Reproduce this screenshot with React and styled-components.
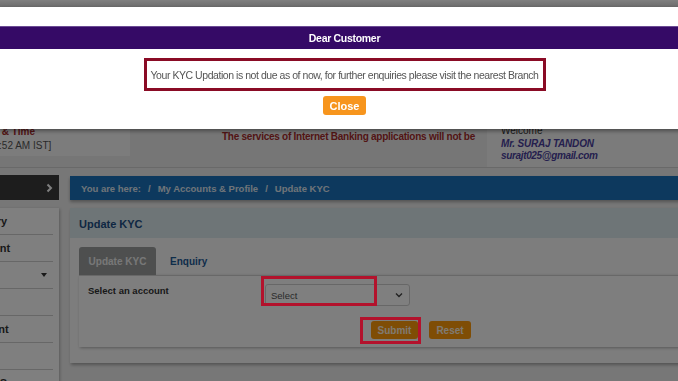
import React from "react";
import styled, { createGlobalStyle } from "styled-components";

const GlobalStyle = createGlobalStyle`
  html, body {
    margin: 0;
    padding: 0;
    overflow: hidden;
    background: #efefef;
    font-family: "Liberation Sans", Arial, sans-serif;
  }
`;

const Viewport = styled.div`
  width: 678px;
  height: 381px;
  overflow: hidden;
`;

const Page = styled.div`
  margin-left: -110px;
  width: 820px;
`;

const TopNav = styled.div`
  height: 7px;
  background: linear-gradient(#ffffff, #d8d8d8);
  border-bottom: 1px solid #9a9a9a;
`;

const Header = styled.div`
  height: 159px;
  display: flex;
  align-items: flex-end;
  background: #ececec;
  border-bottom: 1px solid #d2d2d2;
`;

const LoginBox = styled.div`
  width: 240px;
  height: 40px;
  margin-bottom: 11px;
  box-sizing: border-box;
  padding: 9px 0 0 ${({ pad }) => pad}px;
  background: #f9f9f9;
  font-size: 10px;
  line-height: 14px;
  color: #555;
`;

const LoginTitle = styled.div`
  font-weight: bold;
  color: #a52a2a;
`;

const Notice = styled.div`
  margin: 0 0 25px 92px;
  font-size: 10px;
  letter-spacing: -0.25px;
  font-weight: bold;
  color: #a52a2a;
  white-space: nowrap;
`;

const WelcomeBox = styled.div`
  margin-left: auto;
  width: 223px;
  height: 56px;
  box-sizing: border-box;
  padding: 14px 0 0 14px;
  background: #f6f6f6;
  font-size: 10px;
  line-height: 12.5px;
  color: #333;
`;

const UserLine = styled.div`
  font-weight: bold;
  font-style: italic;
  font-size: ${({ size }) => size}px;
  letter-spacing: ${({ spacing }) => spacing}px;
  color: #4a3f9c;
`;

const Body = styled.div`
  display: flex;
  gap: 11px;
  padding-top: 7px;
`;

const Sidebar = styled.div`
  width: 169px;
  flex-shrink: 0;
`;

const SideHead = styled.div`
  height: 25px;
  background: #3b3b3b;
  color: #fff;
  display: flex;
  align-items: center;
  justify-content: flex-end;
  padding-right: 6px;
`;

const SideMenu = styled.div`
  margin-top: 8px;
  background: #fff;
  box-shadow: 1px 1px 3px rgba(0, 0, 0, 0.25);
  padding-right: 6px;
`;

const SideItem = styled.div`
  height: 26px;
  display: flex;
  align-items: center;
  justify-content: space-between;
  padding: 0 6px 0 20px;
  border-bottom: 1px solid #cfcfcf;
  font-size: 11px;
  font-weight: bold;
  color: #333;
  white-space: nowrap;
`;

const Caret = styled.span`
  width: 0;
  height: 0;
  border-left: 3.5px solid transparent;
  border-right: 3.5px solid transparent;
  border-top: 4px solid #333;
`;

const Main = styled.div`
  flex: 1;
`;

const Breadcrumb = styled.div`
  height: 24px;
  margin-top: 1px;
  background: #1b73bd;
  box-shadow: 0 2px 3px rgba(0, 0, 0, 0.3);
  display: flex;
  align-items: center;
  gap: 7px;
  padding-left: 11px;
  font-size: 9.5px;
  font-weight: bold;
  color: #dfe8f2;
`;

const Card = styled.div`
  margin-top: 8px;
  background: #fbfbfb;
  box-shadow: 1px 2px 3px rgba(0, 0, 0, 0.3);
  padding-bottom: 16px;
`;

const CardHead = styled.div`
  height: 30px;
  background: #dcebee;
  display: flex;
  align-items: center;
  padding: 1px 0 0 9px;
  box-sizing: border-box;
  font-size: 11px;
  font-weight: bold;
  color: #1d4f86;
`;

const CardBody = styled.div`
  padding: 9px 0 0 9px;
`;

const Tabs = styled.div`
  display: flex;
  height: 28px;
`;

const Tab = styled.div`
  width: ${({ active }) => (active ? "77px" : "auto")};
  padding: ${({ active }) => (active ? "0" : "0 14px")};
  display: flex;
  align-items: center;
  justify-content: center;
  border-radius: 3px 3px 0 0;
  background: ${({ active }) => (active ? "#9c9f9f" : "transparent")};
  color: ${({ active }) => (active ? "#f0f0f0" : "#1d5a96")};
  font-size: 10px;
  font-weight: bold;
`;

const TabPanel = styled.div`
  height: 72px;
  background: #fdfdfd;
  border-top: 1px solid #d0d0d0;
  box-shadow: 1px 1px 3px rgba(0, 0, 0, 0.3);
  box-sizing: border-box;
  padding: 7px 0 0 9px;
`;

const FieldRow = styled.div`
  display: flex;
  align-items: flex-start;
`;

const Label = styled.div`
  width: 177px;
  flex-shrink: 0;
  font-size: 9.5px;
  font-weight: bold;
  color: #333;
  padding-top: 2px;
`;

const SelectWrap = styled.div`
  position: relative;
  margin-top: 1px;
`;

const Select = styled.div`
  width: 145px;
  height: 22px;
  box-sizing: border-box;
  border: 1px solid #cfcfcf;
  border-radius: 3px;
  background: #fff;
  display: flex;
  align-items: center;
  justify-content: space-between;
  padding: 0 6px 0 5px;
  font-size: 9.5px;
  color: #555;
`;

const ButtonRow = styled.div`
  display: flex;
  gap: 11px;
  margin-top: 15px;
  padding-left: 283px;
`;

const ActionButton = styled.div`
  position: relative;
  width: ${({ w }) => w}px;
  height: 18px;
  display: flex;
  align-items: center;
  justify-content: center;
  border-radius: 3px;
  background: #ff9a0a;
  color: #fff4e2;
  font-size: 10px;
  font-weight: bold;
`;

const Mark = styled.div`
  position: absolute;
  z-index: 30;
  border: 3px solid #b3122c;
  box-sizing: border-box;
`;

const Overlay = styled.div`
  position: fixed;
  inset: 0;
  z-index: 10;
  background: rgba(0, 0, 0, 0.5);
`;

const Modal = styled.div`
  position: fixed;
  top: 7px;
  left: 0;
  right: -11px;
  height: 122px;
  z-index: 20;
  background: #fff;
  box-shadow: 0 2px 4px rgba(0, 0, 0, 0.4);
  padding-top: 19px;
  box-sizing: border-box;
  display: flex;
  flex-direction: column;
  align-items: center;
`;

const ModalHead = styled.div`
  align-self: stretch;
  height: 23px;
  background: #350a66;
  border-top: 1px solid #6b4c94;
  box-sizing: border-box;
  display: flex;
  align-items: center;
  justify-content: center;
  color: #fff;
  font-size: 10.5px;
  letter-spacing: -0.3px;
  font-weight: bold;
`;

const Message = styled.div`
  margin-top: 9px;
  width: 402px;
  height: 33px;
  box-sizing: border-box;
  border: 3px solid #8a0b25;
  display: flex;
  align-items: center;
  justify-content: center;
  font-size: 10.5px;
  letter-spacing: -0.45px;
  color: #555;
  white-space: nowrap;
`;

const CloseButton = styled.div`
  margin-top: 5px;
  width: 43px;
  height: 19px;
  border-radius: 3px;
  background: #f7951d;
  display: flex;
  align-items: center;
  justify-content: center;
  color: #fff;
  font-size: 11px;
  font-weight: bold;
`;

function Chevron() {
  return (
    <svg width="7" height="10" viewBox="0 0 7 10">
      <path d="M1.5 1.5 L5 5 L1.5 8.5" stroke="#fff" strokeWidth="2" fill="none" />
    </svg>
  );
}

function SelectArrow() {
  return (
    <svg width="8" height="6" viewBox="0 0 8 6">
      <path d="M1 1.5 L4 4.5 L7 1.5" stroke="#444" strokeWidth="1.4" fill="none" />
    </svg>
  );
}

export default function App() {
  const menu = [
    "Account Summary",
    "Account Statement",
    "Transfers",
    "e-Services",
    "My Demat Account",
    "Deposits",
    "View Your Credit Score",
  ];

  return (
    <>
      <GlobalStyle />
      <Viewport>
        <Page>
          <TopNav />
          <Header>
            <LoginBox pad={34}>
              <LoginTitle>Last Login Date &amp; Time</LoginTitle>
              <div>[12/10/2023 9:41:52 AM IST]</div>
            </LoginBox>
            <Notice>The services of Internet Banking applications will not be</Notice>
            <WelcomeBox>
              <div>Welcome</div>
              <UserLine size={10} spacing={-0.2}>Mr. SURAJ TANDON</UserLine>
              <UserLine size={10} spacing={-0.35}>surajt025@gmail.com</UserLine>
            </WelcomeBox>
          </Header>
          <Body>
            <Sidebar>
              <SideHead>
                <Chevron />
              </SideHead>
              <SideMenu>
                {menu.map((item, i) => (
                  <SideItem key={item}>
                    <span>{item}</span>
                    {i === 2 && <Caret />}
                  </SideItem>
                ))}
              </SideMenu>
            </Sidebar>
            <Main>
              <Breadcrumb>
                <span>You are here:</span>
                <span>/</span>
                <span>My Accounts &amp; Profile</span>
                <span>/</span>
                <span>Update KYC</span>
              </Breadcrumb>
              <Card>
                <CardHead>Update KYC</CardHead>
                <CardBody>
                  <Tabs>
                    <Tab active>Update KYC</Tab>
                    <Tab>Enquiry</Tab>
                  </Tabs>
                  <TabPanel>
                    <FieldRow>
                      <Label>Select an account</Label>
                      <SelectWrap>
                        <Mark style={{ left: -4, top: -8, width: 116, height: 30 }} />
                        <Select>
                          <span>Select</span>
                          <SelectArrow />
                        </Select>
                      </SelectWrap>
                    </FieldRow>
                    <ButtonRow>
                      <ActionButton w={47}>
                        <Mark style={{ left: -11, top: -4, width: 61, height: 27 }} />
                        Submit
                      </ActionButton>
                      <ActionButton w={42}>Reset</ActionButton>
                    </ButtonRow>
                  </TabPanel>
                </CardBody>
              </Card>
            </Main>
          </Body>
        </Page>
      </Viewport>
      <Overlay />
      <Modal>
        <ModalHead>Dear Customer</ModalHead>
        <Message>
          Your KYC Updation is not due as of now, for further enquiries please visit the nearest Branch
        </Message>
        <CloseButton>Close</CloseButton>
      </Modal>
    </>
  );
}
